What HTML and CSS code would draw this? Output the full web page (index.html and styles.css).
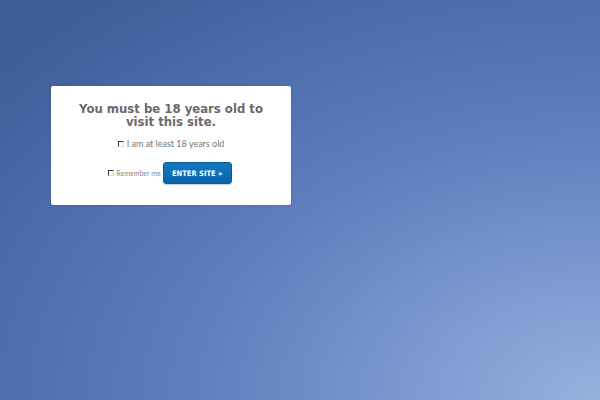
FILE: index.html
```html
<!DOCTYPE html>
<html>
<head>
<meta charset="utf-8">
<link rel="stylesheet" href="styles.css">
</head>
<body>
<div class="page">
  <div class="modal">
    <h1 class="title">You must be 18 years old to visit this site.</h1>
    <label class="confirm"><span class="box"></span>I am at least 18 years old</label>
    <div class="actions">
      <label class="remember"><span class="box small"></span>Remember me</label>
      <button class="enter">ENTER SITE »</button>
    </div>
  </div>
</div>
</body>
</html>
```
FILE: styles.css
```css
html, body {
  margin: 0;
  padding: 0;
  height: 100%;
}
body {
  background: radial-gradient(ellipse 130% 130% at 100% 100%, #93b2dd 0%, #7896cd 28%, #5e7ebd 52%, #5070b0 72%, #3e5e99 100%);
  font-family: "DejaVu Sans", sans-serif;
}
.page {
  padding: 86px 0 0 51px;
}
.modal {
  width: 240px;
  height: 119px;
  box-sizing: border-box;
  background: #fff;
  border-radius: 2px;
  box-shadow: 0 0 2px rgba(0,0,0,0.25);
  padding: 17px 10px 0;
  display: flex;
  flex-direction: column;
  align-items: center;
}
.title {
  margin: 0;
  font-family: "DejaVu Sans", sans-serif;
  font-weight: bold;
  font-size: 11.7px;
  line-height: 13px;
  color: #6a6a6a;
  text-align: center;
  width: 215px;
}
.confirm {
  margin-top: 9px;
  font-family: Lato, sans-serif;
  font-size: 9px;
  color: #777;
  display: flex;
  align-items: center;
}
.box {
  display: inline-block;
  width: 4px;
  height: 4px;
  border-top: 1px solid #333;
  border-left: 1px solid #333;
  border-right: 1px solid #ddd;
  border-bottom: 1px solid #ddd;
  margin-right: 3px;
}
.actions {
  margin-top: 13px;
  display: flex;
  align-items: center;
  margin-left: -2px;
}
.remember {
  font-family: Lato, sans-serif;
  font-size: 7px;
  color: #888;
  display: flex;
  align-items: center;
  margin-right: 2px;
}
.box.small {
  margin-right: 2px;
}
.enter {
  width: 69px;
  height: 22px;
  border: 1px solid #0a5b9c;
  border-radius: 3px;
  background: linear-gradient(#1478c0, #0865ad);
  color: #fff;
  font-family: "DejaVu Sans Condensed", "DejaVu Sans", sans-serif;
  font-weight: bold;
  font-size: 7.5px;
  padding: 0;
  box-shadow: 0 1px 1px rgba(0,0,0,0.2);
}
```
